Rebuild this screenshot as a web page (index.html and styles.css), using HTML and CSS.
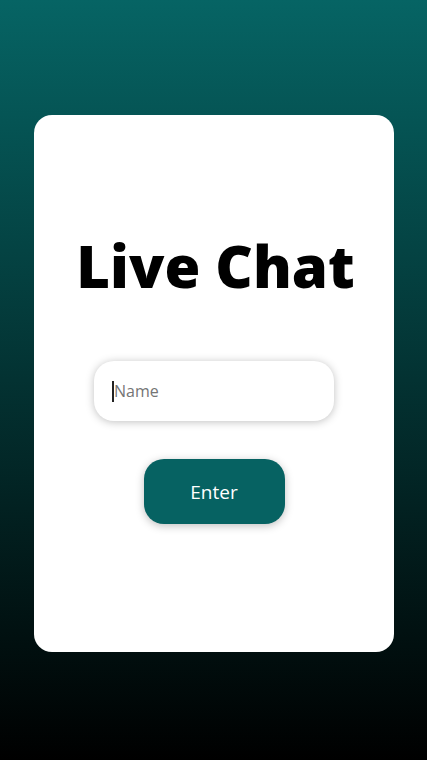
FILE: index.html
```html
<!DOCTYPE html>
<html>
<head>
<meta charset="utf-8">
<link rel="stylesheet" href="styles.css">
</head>
<body>
<div class="page">
  <div class="card">
    <h1 class="title">Live Chat</h1>
    <div class="field"><span class="caret"></span><span class="placeholder">Name</span></div>
    <button class="enter">Enter</button>
  </div>
</div>
</body>
</html>
```
FILE: styles.css
```css
html, body {
  margin: 0;
  padding: 0;
  height: 100%;
}
body {
  background: linear-gradient(to bottom, #066464 0%, #000000 100%);
  font-family: "Open Sans", "Noto Sans", sans-serif;
}
.page {
  height: 760px;
  display: flex;
  justify-content: center;
  padding-top: 115px;
  box-sizing: border-box;
  padding-left: 1px;
}
.card {
  width: 360px;
  height: 537px;
  background: #fff;
  border-radius: 18px;
  display: flex;
  flex-direction: column;
  align-items: center;
  box-sizing: border-box;
  padding-top: 114px;
}
.title {
  margin: 0;
  font-size: 58px;
  font-weight: 800;
  line-height: 74px;
  color: #000;
  letter-spacing: 0;
  padding-left: 3px;
}
.field {
  margin-top: 58px;
  width: 240px;
  height: 60px;
  border-radius: 20px;
  background: #fff;
  box-shadow: 0 1px 8px rgba(0,0,0,0.25);
  display: flex;
  align-items: center;
  padding-left: 18px;
  box-sizing: border-box;
}
.caret {
  width: 2px;
  height: 21px;
  background: #222;
}
.placeholder {
  font-size: 16px;
  color: #757575;
}
.enter {
  margin-top: 38px;
  width: 141px;
  height: 65px;
  border: none;
  border-radius: 20px;
  background: #066262;
  color: #fff;
  font-family: "Open Sans", "Noto Sans", sans-serif;
  font-size: 19px;
  box-shadow: 0 2px 8px rgba(0,0,0,0.25);
  padding: 0;
}
```
